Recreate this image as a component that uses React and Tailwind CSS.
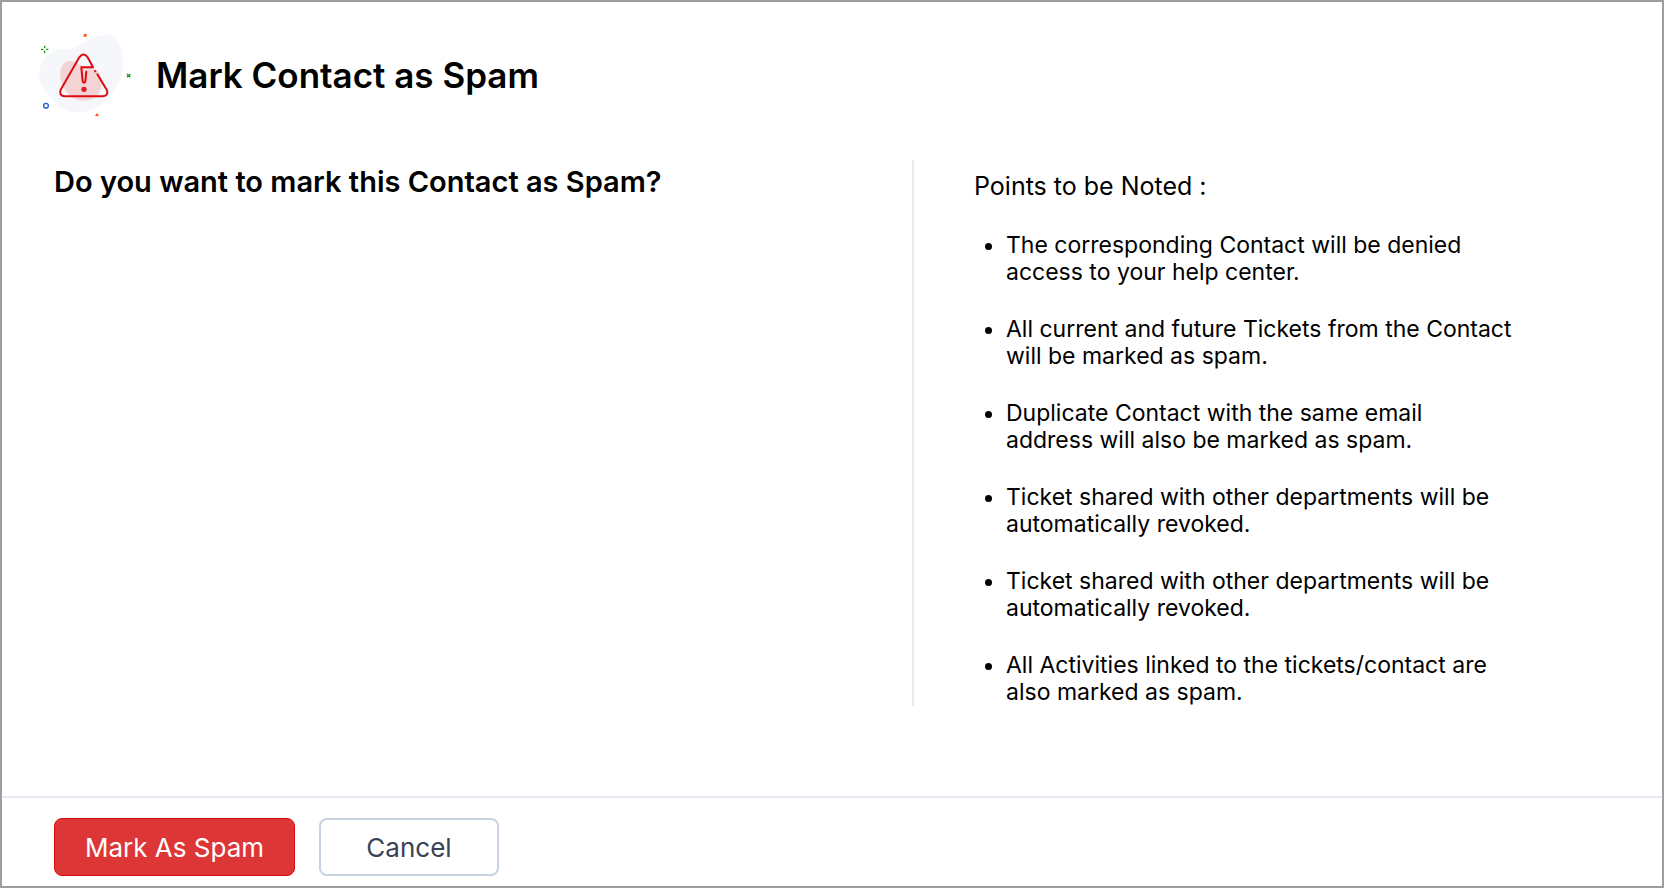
const POINTS = [
  "The corresponding Contact will be denied access to your help center.",
  "All current and future Tickets from the Contact will be marked as spam.",
  "Duplicate Contact with the same email address will also be marked as spam.",
  "Ticket shared with other departments will be automatically revoked.",
  "Ticket shared with other departments will be automatically revoked.",
  "All Activities linked to the tickets/contact are also marked as spam."
]

function WarningIcon() {
  return (
    <svg viewBox="0 0 360 330" className="w-[120px] h-[110px] shrink-0" fill="none" aria-hidden="true">
      <path
        d="M112 87C140 84 190 45 228 44C266 44 279 82 279 128C277 178 254 223 215 252C184 274 148 282 119 275C91 268 72 242 51 220C32 199 24 168 29 142C36 109 68 86 112 87Z"
        fill="#f5f7fb"
      />
      <path
        d="M119 123C101 124 90 142 90 165C91 195 110 224 136 237C158 247 190 241 204 224C217 207 218 181 209 162C201 146 186 142 169 140C148 138 141 123 119 123Z"
        fill="#f4d3d5"
      />
      <g stroke="#dc0d12" strokeWidth="6" strokeLinecap="round" strokeLinejoin="round">
        <path d="M169 155L166 184Q162 193 158 184L154 142H189L173 112Q161 95 148 112L92 209Q86 226 103 229H218Q236 227 231 211L202 163" />
        <path d="M195 153L196 154" />
      </g>
      <circle cx="162" cy="208" r="8" fill="#dc1f25" />
      <path d="M44 77V84M44 92V99M33 88H40M48 88H55" stroke="#159a1c" strokeWidth="4" />
      <path d="M291 162L301 172M301 162L291 172" stroke="#159a1c" strokeWidth="4" />
      <circle cx="48" cy="257" r="7" stroke="#2457d6" strokeWidth="4" />
      <rect x="161" y="42" width="9" height="8" fill="#ff5012" />
      <path d="M201 279L207 288H195Z" fill="#ff5012" />
    </svg>
  )
}

export default function MarkContactAsSpam() {
  return (
    <div className="min-h-screen flex flex-col bg-white border-2 border-[#9b9fa1] text-black font-['Inter','Liberation_Sans',sans-serif]">
      <header className="flex items-center gap-1.5 pl-7 pt-[18px]">
        <WarningIcon />
        <h1 className="text-[35px] leading-10 font-semibold">Mark Contact as Spam</h1>
      </header>

      <main className="flex-1 flex items-start pt-[30px] pb-[88px] pl-13 pr-12">
        <section className="flex-1 pt-1">
          <h2 className="text-[29px] leading-9 font-semibold">
            Do you want to mark this Contact as Spam?
          </h2>
        </section>

        <aside className="w-[45%] border-l-2 border-[#e5e9f0] pl-15 pt-3">
          <h3 className="text-[25px] leading-7">Points to be Noted :</h3>
          <ul className="list-disc pl-8 pt-8 space-y-[30px] text-[23px] leading-[27px] max-w-[539px]">
            {POINTS.map((point, i) => (
              <li key={i}>{point}</li>
            ))}
          </ul>
        </aside>
      </main>

      <footer className="flex items-center gap-6 border-t-2 border-[#e5ebf0] pl-13 pt-5 pb-[10px]">
        <button
          type="button"
          className="h-[58px] w-[241px] rounded-lg border border-[#d90a0a] bg-[#dd3636] text-white text-[26px]"
        >
          Mark As Spam
        </button>
        <button
          type="button"
          className="h-[58px] w-[180px] rounded-lg border-2 border-[#c8d3e2] bg-white text-[#394256] text-[26px]"
        >
          Cancel
        </button>
      </footer>
    </div>
  )
}
